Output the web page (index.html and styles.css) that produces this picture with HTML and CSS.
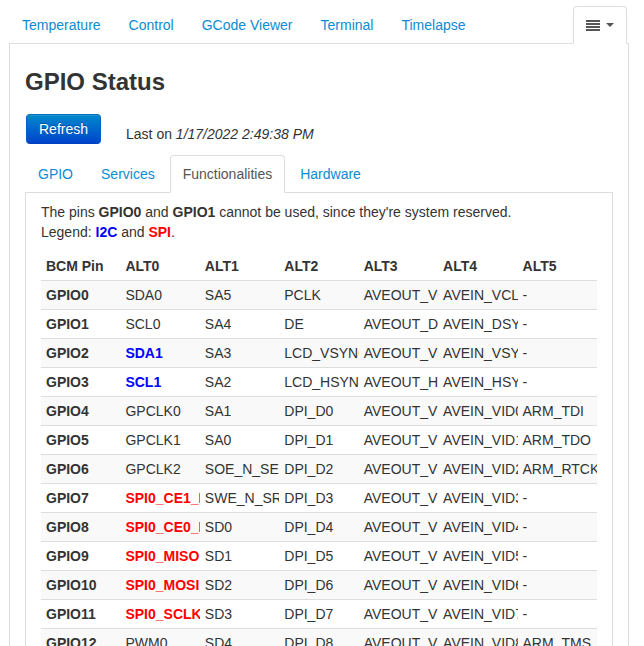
FILE: index.html
```html
<!DOCTYPE html>
<html lang="en">
<head>
<meta charset="utf-8">
<title>GPIO Status</title>
<link rel="stylesheet" href="styles.css">
</head>
<body>
<nav class="tabs">
  <a class="tab" href="#temp">Temperature</a>
  <a class="tab" href="#control">Control</a>
  <a class="tab" href="#gcode">GCode Viewer</a>
  <a class="tab" href="#term">Terminal</a>
  <a class="tab" href="#timelapse">Timelapse</a>
  <button class="tab tab-active tab-menu" type="button" aria-label="More tabs">
    <svg class="bars" viewBox="0 0 14 11" aria-hidden="true"><path d="M0 0h14v2H0zM0 3h14v2H0zM0 6h14v2H0zM0 9h14v2H0z"/></svg>
    <svg class="caret" viewBox="0 0 8 4" aria-hidden="true"><path d="M0 0h8L4 4z"/></svg>
  </button>
</nav>
<main class="panel panel-main">
  <h1 class="title">GPIO Status</h1>
  <div class="status">
    <button class="refresh" type="button">Refresh</button>
    <span>Last on <em>1/17/2022 2:49:38 PM</em></span>
  </div>
  <nav class="tabs">
    <a class="tab" href="#gpio">GPIO</a>
    <a class="tab" href="#services">Services</a>
    <a class="tab tab-active" href="#functionalities">Functionalities</a>
    <a class="tab" href="#hardware">Hardware</a>
  </nav>
  <section class="panel panel-inner">
    <p class="note">The pins <b>GPIO0</b> and <b>GPIO1</b> cannot be used, since they're system reserved.<br>Legend: <b class="i2c">I2C</b> and <b class="spi">SPI</b>.</p>
    <table class="pins">
      <thead>
        <tr><th>BCM Pin</th><th>ALT0</th><th>ALT1</th><th>ALT2</th><th>ALT3</th><th>ALT4</th><th>ALT5</th></tr>
      </thead>
      <tbody>
        <tr><th>GPIO0</th><td>SDA0</td><td>SA5</td><td>PCLK</td><td>AVEOUT_VCLK</td><td>AVEIN_VCLK</td><td>-</td></tr>
        <tr><th>GPIO1</th><td>SCL0</td><td>SA4</td><td>DE</td><td>AVEOUT_DSYNC</td><td>AVEIN_DSYNC</td><td>-</td></tr>
        <tr><th>GPIO2</th><td class="i2c">SDA1</td><td>SA3</td><td>LCD_VSYNC</td><td>AVEOUT_VSYNC</td><td>AVEIN_VSYNC</td><td>-</td></tr>
        <tr><th>GPIO3</th><td class="i2c">SCL1</td><td>SA2</td><td>LCD_HSYNC</td><td>AVEOUT_HSYNC</td><td>AVEIN_HSYNC</td><td>-</td></tr>
        <tr><th>GPIO4</th><td>GPCLK0</td><td>SA1</td><td>DPI_D0</td><td>AVEOUT_VID0</td><td>AVEIN_VID0</td><td>ARM_TDI</td></tr>
        <tr><th>GPIO5</th><td>GPCLK1</td><td>SA0</td><td>DPI_D1</td><td>AVEOUT_VID1</td><td>AVEIN_VID1</td><td>ARM_TDO</td></tr>
        <tr><th>GPIO6</th><td>GPCLK2</td><td>SOE_N_SE</td><td>DPI_D2</td><td>AVEOUT_VID2</td><td>AVEIN_VID2</td><td>ARM_RTCK</td></tr>
        <tr><th>GPIO7</th><td class="spi">SPI0_CE1_N</td><td>SWE_N_SRW_N</td><td>DPI_D3</td><td>AVEOUT_VID3</td><td>AVEIN_VID3</td><td>-</td></tr>
        <tr><th>GPIO8</th><td class="spi">SPI0_CE0_N</td><td>SD0</td><td>DPI_D4</td><td>AVEOUT_VID4</td><td>AVEIN_VID4</td><td>-</td></tr>
        <tr><th>GPIO9</th><td class="spi">SPI0_MISO</td><td>SD1</td><td>DPI_D5</td><td>AVEOUT_VID5</td><td>AVEIN_VID5</td><td>-</td></tr>
        <tr><th>GPIO10</th><td class="spi">SPI0_MOSI</td><td>SD2</td><td>DPI_D6</td><td>AVEOUT_VID6</td><td>AVEIN_VID6</td><td>-</td></tr>
        <tr><th>GPIO11</th><td class="spi">SPI0_SCLK</td><td>SD3</td><td>DPI_D7</td><td>AVEOUT_VID7</td><td>AVEIN_VID7</td><td>-</td></tr>
        <tr><th>GPIO12</th><td>PWM0</td><td>SD4</td><td>DPI_D8</td><td>AVEOUT_VID8</td><td>AVEIN_VID8</td><td>ARM_TMS</td></tr>
      </tbody>
    </table>
  </section>
</main>
</body>
</html>
```
FILE: styles.css
```css
* {
  box-sizing: border-box;
}

body {
  margin: 0;
  padding: 6px 15px 0 9px;
  height: 100vh;
  overflow: hidden;
  background: #fff;
  color: #333;
  font: 14px/20px "Liberation Sans", Arial, sans-serif;
}

.tabs {
  display: flex;
  gap: 2px;
  padding-right: 2px;
  border-bottom: 1px solid #ddd;
}

.tab {
  margin: 0 0 -1px;
  padding: 8px 12px;
  border: 1px solid transparent;
  border-radius: 4px 4px 0 0;
  background: transparent;
  color: #0d8bd2;
  font: inherit;
  text-decoration: none;
  white-space: nowrap;
}

.tab-active {
  border-color: #ddd #ddd #fff;
  background: #fff;
  color: #555;
}

.tab-menu {
  display: flex;
  align-items: center;
  gap: 6px;
  height: 38px;
  margin-left: auto;
}

.bars {
  width: 14px;
  height: 11px;
  fill: #555;
}

.caret {
  width: 8px;
  height: 4px;
  fill: #555;
}

.panel {
  border: 1px solid #ddd;
  border-top: 0;
}

.panel-main {
  padding: 18px 15px 20px;
}

.title {
  margin: 0 0 12px;
  font-size: 24px;
  line-height: 40px;
}

.status {
  display: flex;
  align-items: flex-end;
  gap: 25px;
  margin-bottom: 11px;
  padding-left: 1px;
}

.refresh {
  padding: 4px 12px;
  border: 1px solid;
  border-color: #0670bd #0460c8 #0040bf;
  border-radius: 4px;
  background: linear-gradient(#08c, #04c);
  box-shadow: inset 0 1px 0 rgba(255, 255, 255, 0.1);
  color: #fff;
  font: inherit;
  text-shadow: 0 -1px 0 rgba(0, 0, 0, 0.25);
}

.panel-inner {
  padding: 9px 15px;
}

.note {
  margin: 0 0 10px;
}

.pins {
  width: 100%;
  table-layout: fixed;
  border-collapse: separate;
  border-spacing: 0;
}

.pins th,
.pins td {
  padding: 4px 5px;
  overflow: hidden;
  text-align: left;
  white-space: nowrap;
}

.pins tbody th,
.pins tbody td {
  border-top: 1px solid #ddd;
}

.pins tbody tr:nth-child(odd) {
  background: #f9f9f9;
}

.i2c {
  color: #00f;
  font-weight: bold;
}

.spi {
  color: #f00;
  font-weight: bold;
}
```
